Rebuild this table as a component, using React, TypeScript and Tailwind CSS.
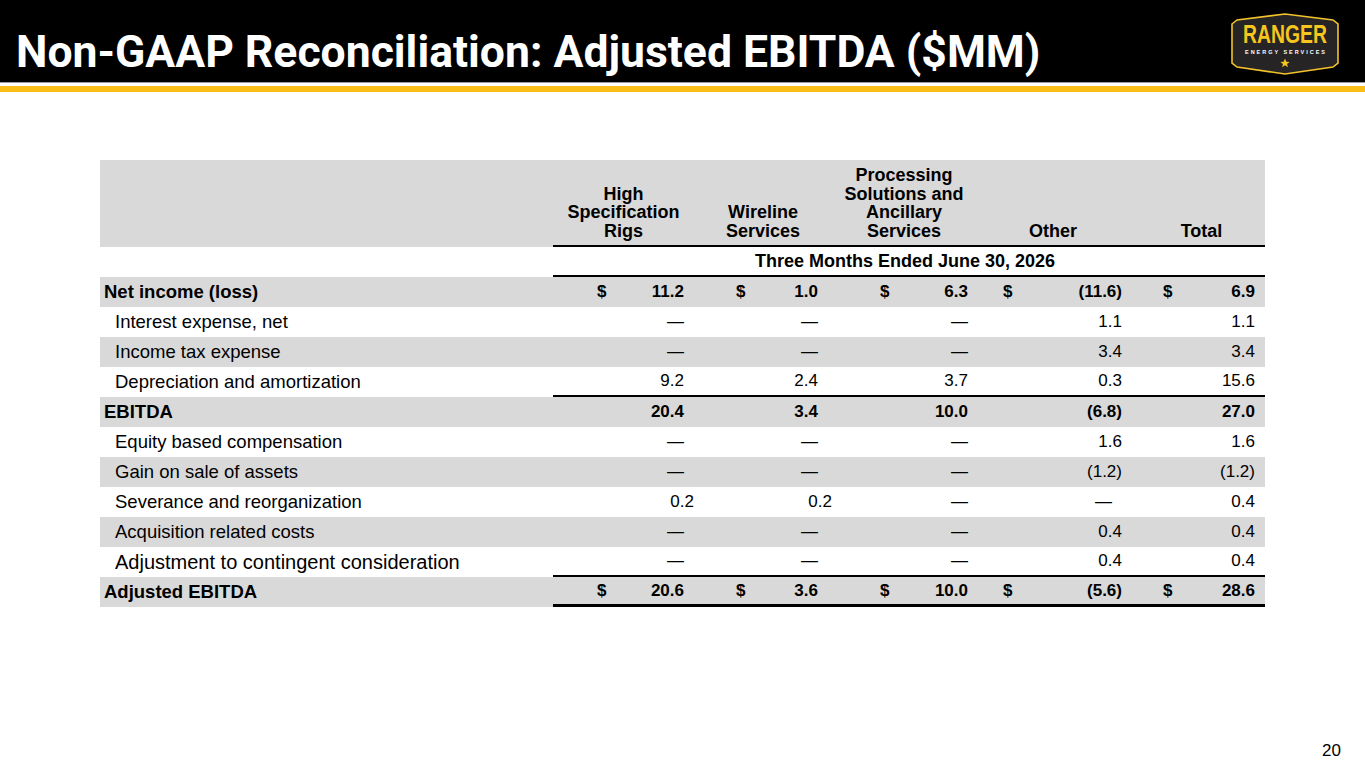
import React from "react";

type Cell = { d?: boolean; v: string; x?: string };
type Row = { label: string; bold?: boolean; gray?: boolean; big?: boolean; border?: string; cells: Cell[] };

const GRID = "grid grid-cols-[453px_141px_138px_144px_154px_135px]";

const colCls = [
  { dl: "pl-[44px]", pr: "pr-[10px]" },
  { dl: "pl-[42px]", pr: "pr-[14px]" },
  { dl: "pl-[48px]", pr: "pr-[8px]" },
  { dl: "pl-[27px]", pr: "pr-[8px]" },
  { dl: "pl-[33px]", pr: "pr-[10px]" },
];

const D = "—";

const rows: Row[] = [
  {
    label: "Net income (loss)",
    bold: true,
    gray: true,
    cells: [
      { d: true, v: "11.2" },
      { d: true, v: "1.0" },
      { d: true, v: "6.3" },
      { d: true, v: "(11.6)" },
      { d: true, v: "6.9" },
    ],
  },
  { label: "Interest expense, net", cells: [{ v: D }, { v: D }, { v: D }, { v: "1.1" }, { v: "1.1" }] },
  { label: "Income tax expense", gray: true, cells: [{ v: D }, { v: D }, { v: D }, { v: "3.4" }, { v: "3.4" }] },
  {
    label: "Depreciation and amortization",
    border: "border-b-2 border-black",
    cells: [{ v: "9.2" }, { v: "2.4" }, { v: "3.7" }, { v: "0.3" }, { v: "15.6" }],
  },
  { label: "EBITDA", bold: true, gray: true, cells: [{ v: "20.4" }, { v: "3.4" }, { v: "10.0" }, { v: "(6.8)" }, { v: "27.0" }] },
  { label: "Equity based compensation", cells: [{ v: D }, { v: D }, { v: D }, { v: "1.6" }, { v: "1.6" }] },
  { label: "Gain on sale of assets", gray: true, cells: [{ v: D }, { v: D }, { v: D }, { v: "(1.2)" }, { v: "(1.2)" }] },
  {
    label: "Severance and reorganization",
    cells: [
      { v: "0.2", x: "pr-0" },
      { v: "0.2", x: "pr-0" },
      { v: D },
      { v: D, x: "pr-[18px]" },
      { v: "0.4" },
    ],
  },
  { label: "Acquisition related costs", gray: true, cells: [{ v: D }, { v: D }, { v: D }, { v: "0.4" }, { v: "0.4" }] },
  {
    label: "Adjustment to contingent consideration",
    big: true,
    border: "border-b-2 border-black",
    cells: [{ v: D }, { v: D }, { v: D }, { v: "0.4" }, { v: "0.4" }],
  },
  {
    label: "Adjusted EBITDA",
    bold: true,
    gray: true,
    border: "border-b-[3px] border-black",
    cells: [
      { d: true, v: "20.6" },
      { d: true, v: "3.6" },
      { d: true, v: "10.0" },
      { d: true, v: "(5.6)" },
      { d: true, v: "28.6" },
    ],
  },
];

function Logo() {
  return (
    <svg width="112" height="65" viewBox="0 0 112 65" className="mt-[6px]">
      <path
        d="M3,12 L8,8 L56,2 L104,8 L109,12 L109,51 L104,55 L56,62 L8,55 L3,51 Z"
        fill="#262424"
        stroke="#f2c32c"
        strokeWidth="1.6"
      />
      <g transform="translate(56,31) scale(1,1.35)">
        <text
          x="0"
          y="0"
          textAnchor="middle"
          fill="#f6c61e"
          fontFamily="'Liberation Sans',Arial,sans-serif"
          fontWeight="bold"
          fontSize="19"
          textLength="84"
          lengthAdjust="spacingAndGlyphs"
        >
          RANGER
        </text>
      </g>
      <text
        x="56"
        y="42"
        textAnchor="middle"
        fill="#ffffff"
        fontFamily="'Liberation Sans',Arial,sans-serif"
        fontWeight="bold"
        fontSize="5.5"
        textLength="80"
        lengthAdjust="spacing"
      >
        ENERGY SERVICES
      </text>
      <polygon
        points="56,46.5 57.3,49.8 60.7,49.9 58,52 59,55.3 56,53.3 53,55.3 54,52 51.3,49.9 54.7,49.8"
        fill="#f6c61e"
      />
    </svg>
  );
}

export default function App() {
  return (
    <div className="w-[1365px] h-[768px] bg-white relative overflow-hidden font-['Liberation_Sans',Arial,sans-serif] text-black">
      <header className="h-[82px] bg-black flex items-center justify-between pl-[16px] pr-[24px]">
        <h1 className="text-white font-['Roboto',sans-serif] font-bold text-[44.5px] leading-none pt-[22px]">
          Non-GAAP Reconciliation: Adjusted EBITDA ($MM)
        </h1>
        <Logo />
      </header>
      <div className="h-[1px] bg-[#9a9a9a]" />
      <div className="h-[3px] bg-white" />
      <div className="h-[6px] bg-[#fbbe17]" />

      <div className="ml-[100px] w-[1165px] mt-[68px]">
        {/* header */}
        <div className={`${GRID} h-[87px] bg-[#d9d9d9] text-[18px] font-bold leading-[18.5px]`}>
          <div />
          <div className="flex items-end justify-center text-center border-b-2 border-black pb-[5px]">
            High
            <br />
            Specification
            <br />
            Rigs
          </div>
          <div className="flex items-end justify-center text-center border-b-2 border-black pb-[5px]">
            Wireline
            <br />
            Services
          </div>
          <div className="flex items-end justify-center text-center border-b-2 border-black pb-[5px]">
            Processing
            <br />
            Solutions and
            <br />
            Ancillary
            <br />
            Services
          </div>
          <div className="flex items-end justify-center text-center border-b-2 border-black pb-[5px]">Other</div>
          <div className="flex items-end justify-center text-center border-b-2 border-black pb-[5px] pl-[8px]">Total</div>
        </div>

        <div className={`${GRID} h-[30px]`}>
          <div />
          <div className="col-span-5 flex items-center justify-center border-b-2 border-black text-[18px] font-bold pr-[8px]">
            Three Months Ended June 30, 2026
          </div>
        </div>

        {rows.map((r) => (
          <div key={r.label} className={`${GRID} h-[30px] ${r.gray ? "bg-[#d9d9d9]" : "bg-white"}`}>
            <div
              className={`flex items-center whitespace-nowrap ${r.bold ? "pl-[4px] font-bold text-[18.5px]" : r.big ? "pl-[15px] text-[20px]" : "pl-[15px] text-[18.5px]"}`}
            >
              {r.label}
            </div>
            {r.cells.map((c, i) => (
              <div
                key={i}
                className={`flex items-center text-[17px] ${r.bold ? "font-bold" : ""} ${r.border ?? ""} ${c.d ? "justify-between " + colCls[i].dl : "justify-end"} ${c.x ?? colCls[i].pr}`}
              >
                {c.d && <span>$</span>}
                <span>{c.v}</span>
              </div>
            ))}
          </div>
        ))}
      </div>

      <div className="absolute left-[1322px] top-[738px] text-[17px] font-['Liberation_Sans',Arial,sans-serif]">20</div>
    </div>
  );
}
